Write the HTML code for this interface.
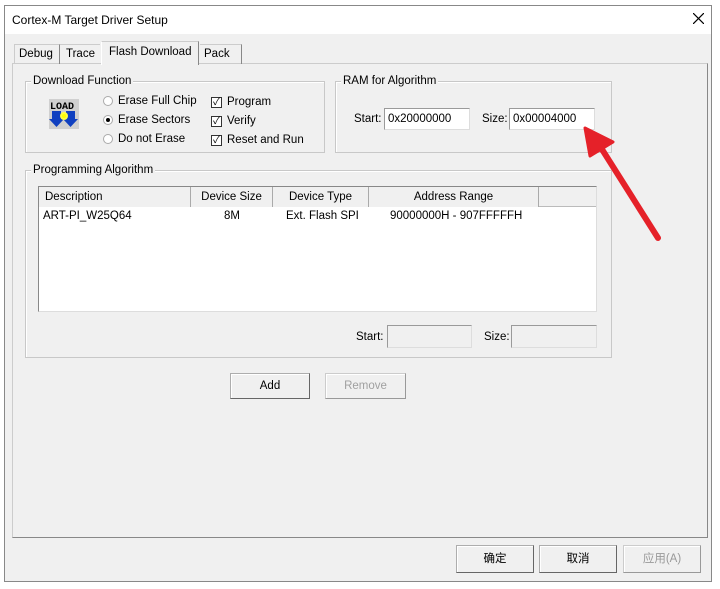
<!DOCTYPE html>
<html><head><meta charset="utf-8"><style>
*{box-sizing:border-box;margin:0;padding:0}
body{width:720px;height:589px;background:#fff;position:relative;overflow:hidden;font-family:"Liberation Sans","Noto Sans CJK SC",sans-serif;font-size:11.5px;color:#000}
.a{position:absolute}
.dlg{left:4px;top:5px;width:708px;height:577px;border:1px solid #888;background:#f0f0f0}
.title{left:5px;top:6px;width:706px;height:28px;background:#fff}
.grp{border:1px solid #c8c8c8;box-shadow:1px 1px 0 #fff inset}
.gl{background:#f0f0f0;padding:0 2px;white-space:nowrap}
.inp{background:#fff;border:1px solid #9a9a9a;border-right-color:#ddd;border-bottom-color:#ddd;padding:4px 3px 0}
.dis{background:#f0f0f0}
.btn{border:1px solid #adadad;border-right-color:#666;border-bottom-color:#666;background:#f0f0f0;text-align:center;line-height:24px;box-shadow:1px 1px 0 #fff inset}
.hd{top:187px;height:20px;border-right:1px solid #aaa;text-align:center;line-height:21px;background:#f0f0f0}
.cb{width:11px;height:11px;border:1px solid #333;background:#fff;font-size:10px;line-height:9px;text-align:center}
.rb{width:10px;height:10px;border-radius:50%;border:1px solid #aaa;background:#fff}
</style></head><body>
<div class="a dlg"></div>
<div class="a title"></div>
<div class="a" style="left:12px;top:13px;font-size:12px">Cortex-M Target Driver Setup</div>
<svg class="a" style="left:693px;top:13px" width="11" height="11"><path d="M0 0L11 11M11 0L0 11" stroke="#000" stroke-width="1.2"/></svg>
<!-- tabs -->
<div class="a" style="left:12px;top:63px;width:696px;height:475px;border:1px solid #ccc;border-right:1px solid #888;border-bottom:1px solid #888;background:#f0f0f0"></div>
<div class="a" style="left:14px;top:44px;width:46px;height:20px;border:1px solid #ccc;border-bottom:none;border-right:1px solid #888"></div>
<div class="a" style="left:19px;top:48px">Debug</div>
<div class="a" style="left:60px;top:44px;width:40px;height:20px;border-top:1px solid #ccc"></div>
<div class="a" style="left:66px;top:48px">Trace</div>
<div class="a" style="left:101px;top:41px;width:98px;height:24px;background:#f0f0f0;border-left:1px solid #fff;border-top:1px solid #ccc;border-right:1px solid #888"></div>
<div class="a" style="left:109px;top:46px">Flash Download</div>
<div class="a" style="left:200px;top:44px;width:42px;height:20px;border-top:1px solid #ccc;border-right:1px solid #888"></div>
<div class="a" style="left:204px;top:48px">Pack</div>
<!-- download function -->
<div class="a grp" style="left:25px;top:81px;width:300px;height:72px"></div>
<div class="a gl" style="left:31px;top:75px">Download Function</div>
<svg class="a" style="left:49px;top:99px" width="30" height="30" viewBox="0 0 30 30">
<rect x="0" y="0" width="30" height="30" fill="#d0d0d0"/>
<text x="1" y="10" font-family="Liberation Mono" font-weight="bold" font-size="10" fill="#000">LOAD</text>
<rect x="3" y="12" width="9" height="9" fill="#1040c0"/><rect x="17" y="12" width="9" height="9" fill="#1040c0"/>
<path d="M0 20H15L7.5 28Z M14 20H29L21.5 28Z" fill="#1040c0"/>
<circle cx="15" cy="17" r="4" fill="#ffff40"/><circle cx="15" cy="17" r="2" fill="#ff0"/>
</svg>
<div class="a rb" style="left:103px;top:96px"></div><div class="a" style="left:118px;top:95px">Erase Full Chip</div>
<div class="a rb" style="left:103px;top:115px"></div><div class="a" style="left:106px;top:118px;width:4px;height:4px;border-radius:50%;background:#000"></div><div class="a" style="left:118px;top:114px">Erase Sectors</div>
<div class="a rb" style="left:103px;top:134px"></div><div class="a" style="left:118px;top:133px">Do not Erase</div>
<div class="a cb" style="left:211px;top:97px">✓</div><div class="a" style="left:227px;top:96px">Program</div>
<div class="a cb" style="left:211px;top:116px">✓</div><div class="a" style="left:227px;top:115px">Verify</div>
<div class="a cb" style="left:211px;top:135px">✓</div><div class="a" style="left:227px;top:134px">Reset and Run</div>
<!-- RAM -->
<div class="a grp" style="left:335px;top:81px;width:277px;height:72px"></div>
<div class="a gl" style="left:341px;top:75px">RAM for Algorithm</div>
<div class="a" style="left:354px;top:113px">Start:</div>
<div class="a inp" style="left:384px;top:108px;width:86px;height:22px">0x20000000</div>
<div class="a" style="left:482px;top:113px">Size:</div>
<div class="a inp" style="left:509px;top:108px;width:86px;height:22px">0x00004000</div>
<!-- programming algorithm -->
<div class="a grp" style="left:25px;top:170px;width:587px;height:188px"></div>
<div class="a gl" style="left:31px;top:164px">Programming Algorithm</div>
<div class="a" style="left:38px;top:186px;width:559px;height:126px;background:#fff;border:1px solid #888;border-right-color:#ddd;border-bottom-color:#ddd"></div>
<div class="a" style="left:39px;top:187px;width:557px;height:20px;background:#f0f0f0;border-bottom:1px solid #bbb"></div>
<div class="a hd" style="left:39px;width:152px;text-align:left;padding-left:6px">Description</div>
<div class="a hd" style="left:191px;width:82px">Device Size</div>
<div class="a hd" style="left:273px;width:96px">Device Type</div>
<div class="a hd" style="left:369px;width:170px">Address Range</div>
<div class="a" style="left:43px;top:210px">ART-PI_W25Q64</div>
<div class="a" style="left:224px;top:210px">8M</div>
<div class="a" style="left:286px;top:210px">Ext. Flash SPI</div>
<div class="a" style="left:390px;top:210px">90000000H - 907FFFFFH</div>
<div class="a" style="left:356px;top:331px">Start:</div>
<div class="a inp dis" style="left:387px;top:325px;width:85px;height:23px"></div>
<div class="a" style="left:484px;top:331px">Size:</div>
<div class="a inp dis" style="left:511px;top:325px;width:86px;height:23px"></div>
<div class="a btn" style="left:230px;top:373px;width:80px;height:26px">Add</div>
<div class="a btn" style="left:325px;top:373px;width:81px;height:26px;color:#a0a0a0;border-color:#ccc #999 #999 #ccc">Remove</div>
<!-- bottom -->
<div class="a btn" style="left:456px;top:545px;width:78px;height:28px;line-height:27px">确定</div>
<div class="a btn" style="left:539px;top:545px;width:78px;height:28px;line-height:27px">取消</div>
<div class="a btn" style="left:623px;top:545px;width:78px;height:28px;line-height:27px;color:#999;border-color:#ccc #999 #999 #ccc">应用(A)</div>
<!-- arrow -->
<svg class="a" style="left:0;top:0" width="720" height="589">
<line x1="658" y1="238" x2="598" y2="143" stroke="#e52129" stroke-width="6" stroke-linecap="round"/>
<path d="M585 128 L613 142 L590 156 Z" fill="#e52129" stroke="#e52129" stroke-width="3" stroke-linejoin="round"/>
</svg>
</body></html>
